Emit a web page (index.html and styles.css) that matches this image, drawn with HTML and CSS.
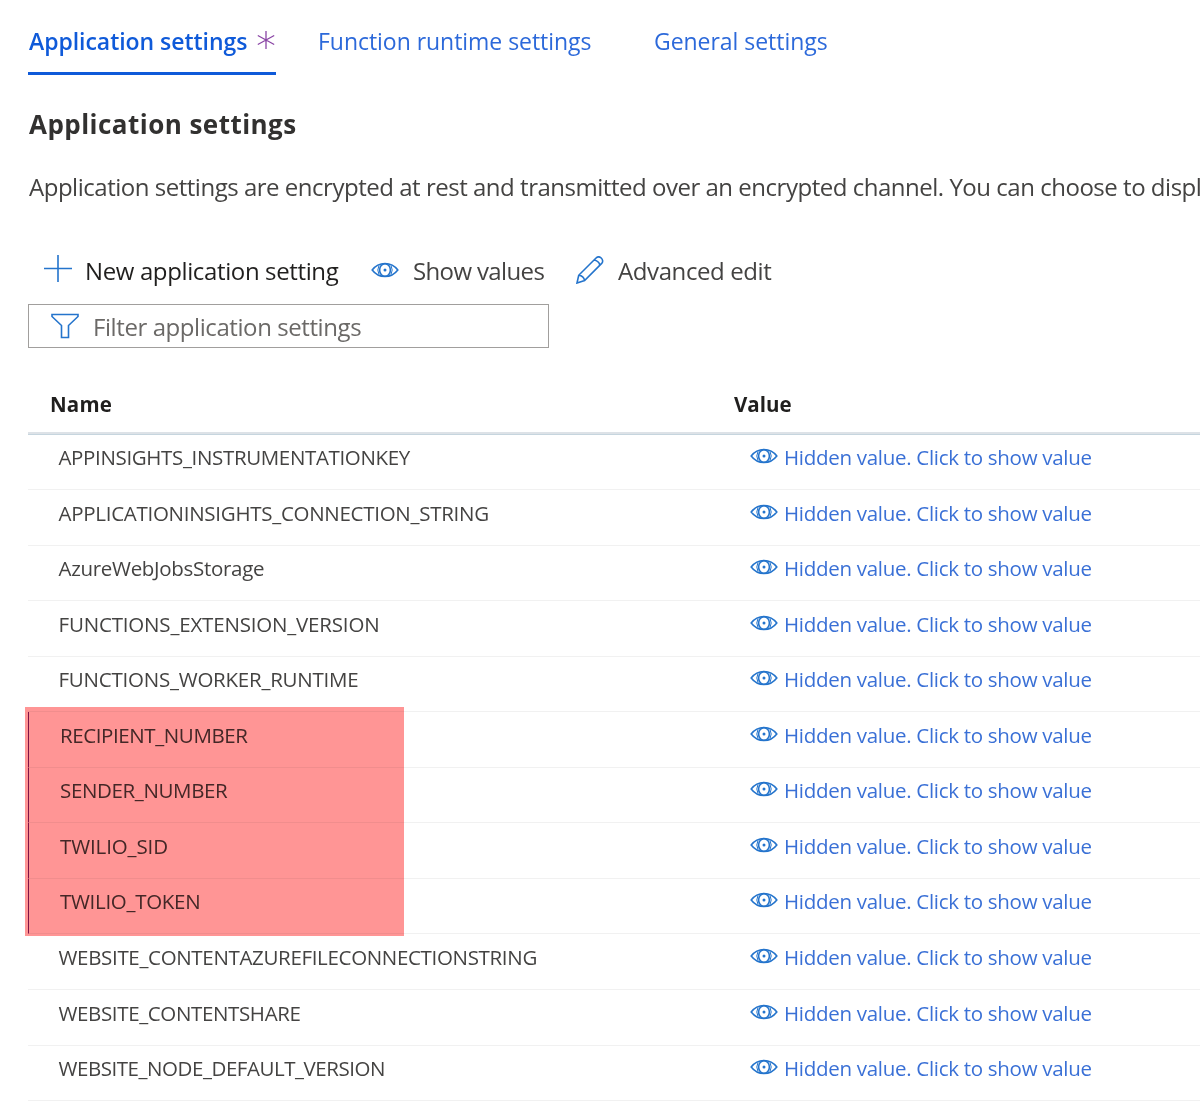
FILE: index.html
```html
<!DOCTYPE html>
<html lang="en">
<head>
<meta charset="utf-8">
<title>Application settings</title>
<link rel="stylesheet" href="styles.css">
</head>
<body>
<svg class="sprite" aria-hidden="true">
  <symbol id="eye" viewBox="0 0 28 16">
    <path d="M1.200 8C4.500 3.600 9 1.500 14 1.500S23.500 3.600 26.800 8C23.500 12.400 19 14.500 14 14.500S4.500 12.400 1.200 8Z"/>
    <ellipse cx="14" cy="8" rx="5.400" ry="6.300"/>
    <path d="M8 3.400Q5.600 8 8 12.600M20 3.400Q22.400 8 20 12.600" stroke-width="1"/>
    <circle cx="14" cy="8" r="1.500" class="pupil"/>
  </symbol>
</svg>
<main class="page">
  <nav class="tabs">
    <a class="tab tab-active"><span>Application settings</span>
      <svg class="star" viewBox="0 0 18 18"><path d="M9 0V18M.8 4.500 17.200 13.500M.8 13.500 17.200 4.500"/></svg></a>
    <a class="tab tab-runtime">Function runtime settings</a>
    <a class="tab">General settings</a>
  </nav>

  <h1 class="title">Application settings</h1>
  <p class="description">Application settings are encrypted at rest and transmitted over an encrypted channel. You can choose to display</p>

  <div class="toolbar">
    <a class="command command-new"><svg class="icon plus" viewBox="0 0 28 28"><path d="M0 13.500H28M14 0V27"/></svg>New application setting</a>
    <a class="command command-show"><svg class="icon eye"><use href="#eye"/></svg>Show values</a>
    <a class="command command-edit"><svg class="icon pencil" viewBox="0 0 28 28"><path d="M1 27 2.700 19.300 19.800 2.200C21.300.7 23.600.5 25.200 2S27.200 5.900 25.700 7.400L8.600 24.500ZM2.700 19.300C6 19.700 8 21.500 8.600 24.500M18 4C21 4.500 23.300 6.700 23.900 9.200"/></svg>Advanced edit</a>
  </div>

  <div class="filter">
    <svg class="icon funnel" viewBox="0 0 28 26"><path d="M1 1.500H27V3.500L17.500 12.500V24.500H10.500V12.500L1 3.500Z"/></svg>
    <span>Filter application settings</span>
  </div>

  <section class="table">
    <div class="head"><span class="head-name">Name</span><span class="head-value">Value</span></div>
    <div class="row"><span class="name" style="letter-spacing:-.35px">APPINSIGHTS_INSTRUMENTATIONKEY</span><a class="value"><svg class="icon eye"><use href="#eye"/></svg>Hidden value. Click to show value</a></div>
    <div class="row"><span class="name" style="letter-spacing:-.28px">APPLICATIONINSIGHTS_CONNECTION_STRING</span><a class="value"><svg class="icon eye"><use href="#eye"/></svg>Hidden value. Click to show value</a></div>
    <div class="row"><span class="name" style="letter-spacing:-.3px">AzureWebJobsStorage</span><a class="value"><svg class="icon eye"><use href="#eye"/></svg>Hidden value. Click to show value</a></div>
    <div class="row"><span class="name" style="letter-spacing:-.18px">FUNCTIONS_EXTENSION_VERSION</span><a class="value"><svg class="icon eye"><use href="#eye"/></svg>Hidden value. Click to show value</a></div>
    <div class="row"><span class="name" style="letter-spacing:-.23px">FUNCTIONS_WORKER_RUNTIME</span><a class="value"><svg class="icon eye"><use href="#eye"/></svg>Hidden value. Click to show value</a></div>
    <div class="marked">
      <div class="row"><span class="name" style="letter-spacing:-.4px">RECIPIENT_NUMBER</span><a class="value"><svg class="icon eye"><use href="#eye"/></svg>Hidden value. Click to show value</a></div>
      <div class="row"><span class="name" style="letter-spacing:-.36px">SENDER_NUMBER</span><a class="value"><svg class="icon eye"><use href="#eye"/></svg>Hidden value. Click to show value</a></div>
      <div class="row"><span class="name" style="letter-spacing:-.12px">TWILIO_SID</span><a class="value"><svg class="icon eye"><use href="#eye"/></svg>Hidden value. Click to show value</a></div>
      <div class="row"><span class="name" style="letter-spacing:-.3px">TWILIO_TOKEN</span><a class="value"><svg class="icon eye"><use href="#eye"/></svg>Hidden value. Click to show value</a></div>
      <div class="highlight"></div>
    </div>
    <div class="row"><span class="name" style="letter-spacing:-.33px">WEBSITE_CONTENTAZUREFILECONNECTIONSTRING</span><a class="value"><svg class="icon eye"><use href="#eye"/></svg>Hidden value. Click to show value</a></div>
    <div class="row"><span class="name" style="letter-spacing:-.36px">WEBSITE_CONTENTSHARE</span><a class="value"><svg class="icon eye"><use href="#eye"/></svg>Hidden value. Click to show value</a></div>
    <div class="row"><span class="name" style="letter-spacing:-.45px">WEBSITE_NODE_DEFAULT_VERSION</span><a class="value"><svg class="icon eye"><use href="#eye"/></svg>Hidden value. Click to show value</a></div>
  </section>
</main>
</body>
</html>
```
FILE: styles.css
```css
* { box-sizing: border-box; }

body {
  margin: 0;
  background: #fff;
  color: #444342;
  font-family: "Open Sans", "Noto Sans", sans-serif;
  overflow: hidden;
}

.page { height: 1108px; padding: 25px 0 0 28px; overflow: hidden; }
.sprite { display: none; }

svg { fill: none; stroke: #2474cc; stroke-width: 1.6; flex: none; }
.pupil { fill: #2474cc; stroke: none; }

.tabs { display: flex; height: 50px; color: #2c69da; font-size: 23px; line-height: 32px; }
.tab { padding-left: 1px; letter-spacing: -.04px; white-space: nowrap; }
.tab-active {
  display: flex;
  width: 248px;
  margin-right: 41px;
  color: #0f5ad9;
  font-weight: 600;
  border-bottom: 3px solid #0f5ad9;
}
.star { width: 18px; height: 18px; margin: 6px 0 0 10px; stroke: #8a45a5; stroke-width: 1.3; }
.tab-runtime { width: 336px; }

.title {
  margin: 29px 0 0 1px;
  color: #323130;
  font-size: 26px;
  font-weight: 700;
  line-height: 40px;
  letter-spacing: .46px;
}

.description {
  margin: 23px 0 0 1px;
  font-size: 24px;
  line-height: 40px;
  letter-spacing: -.48px;
  white-space: nowrap;
}

.toolbar { display: flex; align-items: center; height: 40px; margin-top: 43px; padding-left: 16px; font-size: 24px; }
.command { display: flex; align-items: center; white-space: nowrap; }
.command-new { width: 327px; color: #201f1e; letter-spacing: -.37px; }
.command-show { width: 205px; letter-spacing: -.63px; }
.command-edit { letter-spacing: -.4px; }
.plus { width: 28px; height: 28px; margin: 0 13px 2px 0; }
.eye { width: 28px; height: 16px; }
.command-show .eye { margin: 0 14px 1px 0; }
.pencil { width: 28px; height: 28px; margin: 0 14px 1px 0; }

.filter {
  display: flex;
  align-items: center;
  width: 521px;
  height: 44px;
  margin-top: 14px;
  padding-left: 22px;
  border: 1px solid #a19f9d;
  color: #6b6967;
  font-size: 24px;
  letter-spacing: -.42px;
}
.funnel { width: 28px; height: 26px; margin-right: 14px; }

.table { margin-top: 41px; font-size: 20.5px; line-height: 30px; }
.head {
  display: flex;
  height: 45.5px;
  border-bottom: 1px solid #c6d5de;
  box-shadow: inset 0 -2px #dde2e7;
  color: #201f1e;
  font-weight: 700;
}
.head-name { width: 706px; padding-left: 22px; letter-spacing: .2px; }

.row { display: flex; height: 55.55px; padding-top: 7.6px; border-bottom: 1px solid #f1f1f1; }
.name { width: 722px; padding-left: 30.5px; }
.value { display: flex; color: #3a70d6; letter-spacing: -.29px; white-space: nowrap; }
.value .eye { margin: 6px 6px 0 0; }

.marked { position: relative; }
.marked .row { border-left: 1px solid #7d1f78; }
.marked .name { width: 721px; padding-left: 31px; }
.highlight {
  position: absolute;
  top: -5px;
  left: -3px;
  width: 379px;
  height: 229px;
  background: #ff9595;
  mix-blend-mode: multiply;
}
```
